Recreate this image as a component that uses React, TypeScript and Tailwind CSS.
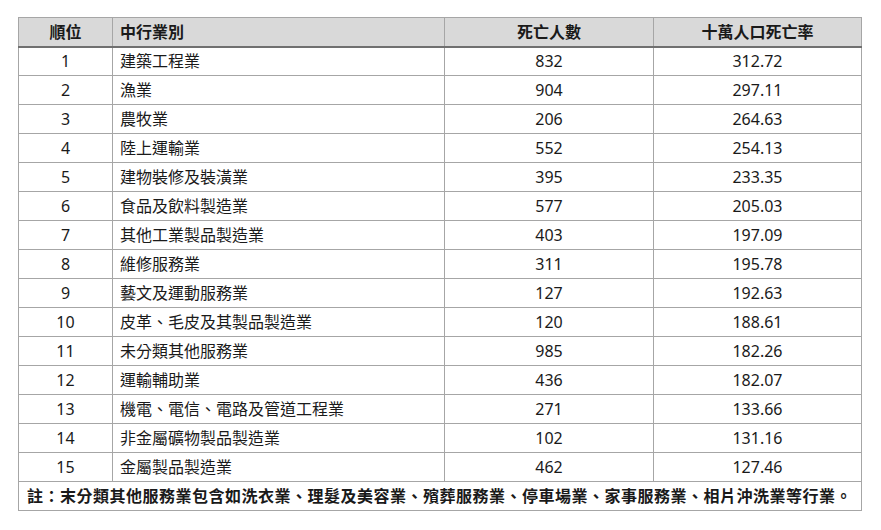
const rows: [number, string, string, string][] = [
  [1, '建築工程業', '832', '312.72'],
  [2, '漁業', '904', '297.11'],
  [3, '農牧業', '206', '264.63'],
  [4, '陸上運輸業', '552', '254.13'],
  [5, '建物裝修及裝潢業', '395', '233.35'],
  [6, '食品及飲料製造業', '577', '205.03'],
  [7, '其他工業製品製造業', '403', '197.09'],
  [8, '維修服務業', '311', '195.78'],
  [9, '藝文及運動服務業', '127', '192.63'],
  [10, '皮革、毛皮及其製品製造業', '120', '188.61'],
  [11, '未分類其他服務業', '985', '182.26'],
  [12, '運輸輔助業', '436', '182.07'],
  [13, '機電、電信、電路及管道工程業', '271', '133.66'],
  [14, '非金屬礦物製品製造業', '102', '131.16'],
  [15, '金屬製品製造業', '462', '127.46'],
];

export default function App() {
  return (
    <div className="w-[881px] h-[530px] bg-white pt-[17px] pl-[18px] font-['Noto_Sans','Noto_Sans_CJK_TC',sans-serif] text-[16px] text-[#1a1a1a]">
      <table className="w-[843px] table-fixed border-collapse">
        <colgroup>
          <col className="w-[94px]" />
          <col className="w-[332px]" />
          <col className="w-[209px]" />
          <col className="w-[208px]" />
        </colgroup>
        <thead>
          <tr className="h-[29px] bg-[#d9d9d9] font-bold">
            <th className="border border-[#a6a6a6] border-b-2 border-b-[#707070] p-0 text-center leading-none">順位</th>
            <th className="border border-[#a6a6a6] border-b-2 border-b-[#707070] p-0 pl-[7px] text-left leading-none">中行業別</th>
            <th className="border border-[#a6a6a6] border-b-2 border-b-[#707070] p-0 text-center leading-none">死亡人數</th>
            <th className="border border-[#a6a6a6] border-b-2 border-b-[#707070] p-0 text-center leading-none">十萬人口死亡率</th>
          </tr>
        </thead>
        <tbody>
          {rows.map(([rank, name, deaths, rate]) => (
            <tr key={rank} className="h-[29px]">
              <td className="border border-[#a6a6a6] p-0 text-center leading-none">{rank}</td>
              <td className="border border-[#a6a6a6] p-0 pl-[7px] text-left leading-none">{name}</td>
              <td className="border border-[#a6a6a6] p-0 text-center leading-none">{deaths}</td>
              <td className="border border-[#a6a6a6] p-0 text-center leading-none">{rate}</td>
            </tr>
          ))}
          <tr className="h-[29px]">
            <td colSpan={4} className="border border-[#a6a6a6] p-0 pl-[8px] text-left font-bold leading-none tracking-[0.5px]">
              註：末分類其他服務業包含如洗衣業、理髮及美容業、殯葬服務業、停車場業、家事服務業、相片沖洗業等行業。
            </td>
          </tr>
        </tbody>
      </table>
    </div>
  );
}
